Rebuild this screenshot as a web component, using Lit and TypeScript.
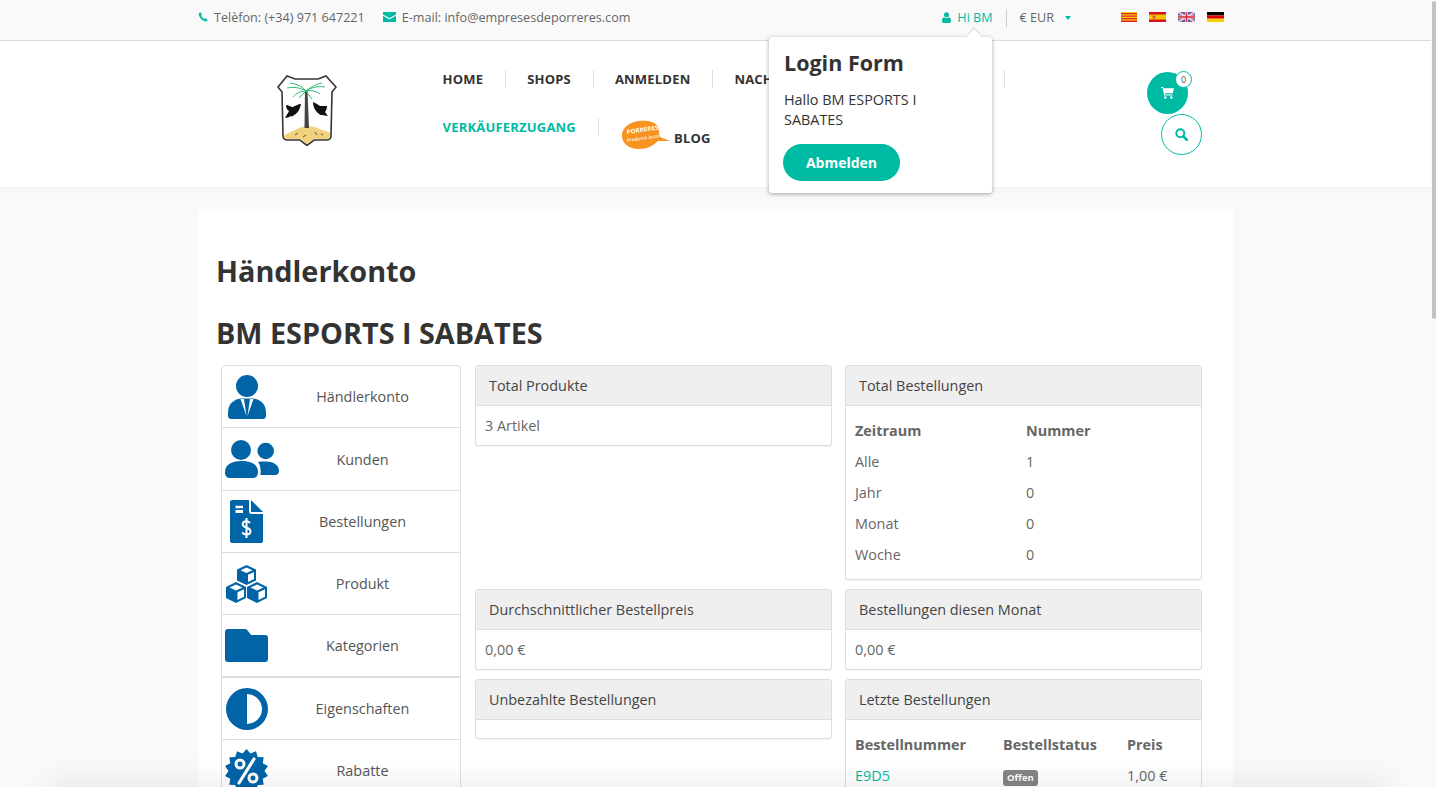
import { LitElement, html, css, svg } from 'lit';
import { customElement } from 'lit/decorators.js';

// spiky badge behind the percent sign
const starPoints = () => {
  const pts: string[] = [];
  for (let i = 0; i < 28; i++) {
    const r = i % 2 ? 18 : 22;
    const a = (i * Math.PI) / 14;
    pts.push(`${(21.5 + r * Math.sin(a)).toFixed(1)},${(22 - r * Math.cos(a)).toFixed(1)}`);
  }
  return pts.join(' ');
};

const icons: Record<string, unknown> = {
  merchant: svg`<circle cx="19" cy="11" r="11"/>
    <path d="M0 38c0-8 4-12 10-14l3-.5h12l3 .5c6 2 10 6 10 14v2c0 3-1 4-4 4H4c-3 0-4-1-4-4z"/>
    <path d="M12.500 24h3.500l2.500 17zM25.500 24h-3.500l-2.500 17z" fill="#fff"/>`,
  customers: svg`<circle cx="16" cy="10" r="10"/>
    <path d="M0 32c0-7 6-11 16.500-11S33 25 33 32c0 4-2 6-5 6H5c-3 0-5-2-5-6z"/>
    <circle cx="40.700" cy="11" r="8.300"/>
    <path d="M33 22c2-.500 5-.500 8-.500 8 0 13 4 13 9 0 3-1.500 4.500-4 4.500H35.500c.500-5 0-10-2.500-13z"/>`,
  orders: svg`<path fill-rule="evenodd" d="M2 0h17v11c0 2 1 3 3 3h11v27c0 1-1 2-2 2H2c-1 0-2-1-2-2V2C0 1 1 0 2 0zM5.500 5.700v2.600H13V5.700zM5.500 10v3H13v-3z"/>
    <path d="M21 0l12 12H21z"/>
    <path d="M20 23c-1-1.200-2.200-1.700-3.500-1.700-2.200 0-3.800 1-3.800 3 0 4.500 7.800 2.500 7.800 7 0 2.200-1.800 3.200-4 3.200-1.700 0-3.300-.800-4.300-2.200M16.500 18v20" fill="none" stroke="#fff" stroke-width="2"/>`,
  product: svg`<path d="M21.500 0l9.500 4.500v11l-9.500 4.500-9.500-4.500v-11z"/>
    <path d="M11 17l10 5v11l-10 5-10-5V22z"/>
    <path d="M32 17l10 5v11l-10 5-10-5V22z"/>
    <g fill="#fff">
      <path d="M21.500 2.500l6 2.800-6 2.800-6-2.800z"/><path d="M23 9.800l6-2.800v7l-6 2.900z"/>
      <path d="M11 19.500l6.500 3-6.500 3-6.500-3z"/><path d="M12.500 27.200l6.500-3v7.500l-6.500 3.200z"/>
      <path d="M32 19.500l6.500 3-6.500 3-6.500-3z"/><path d="M33.500 27.200l6.500-3v7.500l-6.500 3.200z"/>
    </g>`,
  folder: svg`<path d="M3 0h16c2 0 3 .500 4 2l3 4h14c2 0 3 1 3 3v21c0 2-1 3-3 3H3c-2 0-3-1-3-3V3c0-2 1-3 3-3z"/>`,
  contrast: svg`<path fill-rule="evenodd" d="M21 0a21 21 0 1 1 0 42a21 21 0 0 1 0-42zM21 6v30a15 15 0 0 0 0-30z"/>`,
  discount: svg`<polygon points=${starPoints()}/>
    <g fill="none" stroke="#fff"><circle cx="15" cy="15" r="4" stroke-width="3"/><circle cx="28" cy="29" r="4" stroke-width="3"/><path d="M29 10L14 34" stroke-width="3.200" stroke-linecap="round"/></g>`,
};

const menu = [
  { label: 'Händlerkonto', icon: 'merchant', x: 6, w: 38, h: 44, rowH: 62 },
  { label: 'Kunden', icon: 'customers', x: 3, w: 54, h: 38, rowH: 63 },
  { label: 'Bestellungen', icon: 'orders', x: 8, w: 33, h: 43, rowH: 62 },
  { label: 'Produkt', icon: 'product', x: 3, w: 43, h: 38, rowH: 62 },
  { label: 'Kategorien', icon: 'folder', x: 3, w: 43, h: 33, rowH: 63 },
  { label: 'Eigenschaften', icon: 'contrast', x: 4, w: 42, h: 42, rowH: 62 },
  { label: 'Rabatte', icon: 'discount', x: 3, w: 43, h: 44, rowH: 62 },
];

@customElement('app-root')
export class AppRoot extends LitElement {
  static styles = css`
    :host {
      display: block;
      height: 787px;
      overflow: hidden;
      position: relative;
      background: #f9f9f9;
      font-family: 'Open Sans', sans-serif;
      font-size: 14.400px;
      color: #666;
    }

    a { color: inherit; text-decoration: none; }

    .topbar {
      height: 34px;
      padding: 0 212px 6px 198px;
      background: #f9f9f9;
      border-bottom: 1px solid #ddd;
      display: flex;
      align-items: center;
      font-size: 12.600px;
      color: #666;
    }
    .top-left { display: flex; gap: 18px; }
    .top-item { display: flex; align-items: center; gap: 6px; }
    .top-item svg { fill: #00bba3; display: block; }
    .top-right { margin-left: auto; display: flex; align-items: center; }
    .hi { color: #00bba3; display: flex; align-items: center; gap: 6px; padding-right: 13px; }
    .hi svg { fill: #00bba3; display: block; }
    .currency { border-left: 1px solid #ccc; height: 18px; padding-left: 13px; display: flex; align-items: center; gap: 11px; margin-top: 2px; }
    .currency span { margin-top: -2px; }
    .caret { width: 0; height: 0; border: 3.500px solid transparent; border-top: 4px solid #00bba3; border-bottom: 0; }
    .flags { display: flex; gap: 12px; margin-left: 50px; }
    .flags svg { display: block; }

    .header {
      height: 146px;
      background: #fff;
      display: flex;
      box-shadow: 0 2px 8px rgba(0,0,0,.04);
      position: relative;
    }
    .logo { margin: 34px 0 0 277px; width: 60px; height: 71px; flex: none; }
    .nav { margin-left: 105.500px; width: 704.500px; flex: none; padding-top: 29px; }
    .nav-row { display: flex; align-items: center; height: 18px; font-weight: 700; font-size: 13px; color: #333; letter-spacing: .2px; }
    .nav-row + .nav-row { margin-top: 30px; align-items: flex-start; }
    .nav-row a { padding-right: 22px; margin-right: 21px; border-right: 1px solid #ddd; line-height: 18px; flex: none; }
    .nav-row a.wide { width: 270px; padding: 0; margin: 0; box-sizing: content-box; }
    .nav-row .seller { color: #00bba3; margin-right: 22px; }
    .blog { display: flex; align-items: center; gap: 4px; margin-top: 2px; }
    .blog-logo { display: block; flex: none; }
    .blog a { border: 0; padding: 0; margin: 6px 0 0; }
    .actions { margin-top: 31px; width: 56px; display: flex; flex-direction: column; align-items: flex-start; }
    .cart {
      width: 41px; height: 42px; border-radius: 50%; background: #00bba3;
      display: flex; align-items: center; justify-content: center; position: relative;
    }
    .cart svg { fill: #fff; display: block; }
    .badge {
      position: absolute; right: -4px; top: -1px; width: 17px; height: 17px;
      border-radius: 50%; background: #fff; border: 1px solid #00bba3; box-sizing: border-box;
      font-size: 9px; line-height: 15px; text-align: center; color: #555;
    }
    .search {
      margin-left: 14px; width: 41px; height: 41px; box-sizing: border-box;
      border: 1px solid #00bba3; border-radius: 50%; display: flex; align-items: center; justify-content: center;
      background: #fff;
    }
    .search svg { display: block; }

    .popover {
      position: absolute; left: 769px; top: 37px; width: 223px; height: 156px; box-sizing: border-box;
      background: #fff; border-radius: 3px; box-shadow: 0 1px 4px rgba(0,0,0,.35);
      padding: 13px 15px; z-index: 5; color: #333;
    }
    .popover::before {
      content: ''; position: absolute; right: 13px; top: -6px; width: 10px; height: 10px;
      background: #fff; transform: rotate(45deg); box-shadow: -1px -1px 1px rgba(0,0,0,.12);
    }
    .popover h3 { margin: 0 0 14px; font-size: 21.500px; font-weight: 700; line-height: 26px; color: #333; }
    .popover p { margin: 0 0 14px; line-height: 20px; width: 170px; }
    .btn {
      display: block; background: #00bba3; color: #fff; font-weight: 700; font-size: 14px;
      height: 37px; line-height: 37px; width: 117px; text-align: center; border-radius: 19px; margin-left: -1px;
    }

    .main { margin: 22px 203px 0 198px; background: #fff; padding: 42px 31px 0 18px; }
    h1 { margin: 0; color: #333; font-size: 28.800px; font-weight: 700; line-height: 40px; }
    h1.shop { margin-top: 22px; }
    .columns { display: flex; margin-top: 12px; margin-left: 5px; gap: 14px; }
    .side { width: 240px; flex: none; border: 1px solid #ddd; border-radius: 4px 4px 0 0; box-sizing: border-box; height: 500px; }
    .side-item { display: flex; align-items: center; border-bottom: 1px solid #ddd; box-sizing: border-box; color: #555; }
    .side-item:nth-child(5) { border-bottom-width: 2px; }
    .side-item span { flex: 1; text-align: center; }
    .side-ico { flex: none; }
    .side-ico svg { fill: #0064a7; display: block; overflow: visible; }

    .grid { display: grid; grid-template-columns: 357px 357px; column-gap: 13px; align-items: start; align-content: start; }
    .panel { border: 1px solid #ddd; border-radius: 3px; background: #fff; box-sizing: border-box; box-shadow: 0 1px 1px rgba(0,0,0,.05); }
    .panel-head { height: 39px; line-height: 39px; background: #efefef; border-bottom: 1px solid #ddd; padding: 0 13px; color: #444; }
    .panel-body { padding: 10px 9px; color: #666; line-height: 20px; }
    .stat { height: 81px; margin-bottom: 9px; }
    .empty { height: 60px; }
    .empty .panel-body { padding: 0; height: 18px; }
    .a { grid-column: 1; grid-row: 1; height: 81px; }
    .b { grid-column: 2; grid-row: 1; height: 215px; margin-bottom: 9px; }
    .c { grid-column: 1; grid-row: 2; }
    .d { grid-column: 2; grid-row: 2; }
    .e { grid-column: 1; grid-row: 3; }
    .f { grid-column: 2; grid-row: 3; }
    table { border-collapse: collapse; width: 100%; table-layout: fixed; }
    th { text-align: left; font-weight: 700; color: #666; height: 31px; padding: 0; }
    td { height: 31px; padding: 0; color: #666; }
    .col-total { width: 171px; }
    .col-order { width: 148px; }
    .col-status { width: 124px; }
    .tbl { padding: 9px 9px 0; }
    .tbl a { color: #00bba3; }
    .label { display: inline-block; background: #858585; color: #fff; font-size: 9.500px; font-weight: 700; border-radius: 3px; padding: 0 4px; line-height: 16px; }

    .shade {
      position: absolute; left: 50px; right: 50px; bottom: -12px; height: 12px;
      box-shadow: 0 0 30px rgba(0,0,0,.16);
      pointer-events: none;
    }
    .scrollbar { position: absolute; right: 0; top: 0; width: 5px; height: 787px; background: #f9f9f9; z-index: 9; }
    .thumb { position: absolute; left: 1px; top: 1px; right: 0; height: 318px; background: #c2c2c2; border-radius: 2px; }
  `;

  render() {
    return html`
      <div class="topbar">
        <div class="top-left">
          <div class="top-item">
            <svg width="10" height="10" viewBox="0 0 10 10"><path d="M2.500.300L.800 1.200C.300 4.800 4.400 9.400 8.700 9.500l1-1.600-2.300-1.800-1.100.900C5 6.500 3.600 5 3 3.600l1-1z"/></svg>
            <span>Telèfon: (+34) 971 647221</span>
          </div>
          <div class="top-item">
            <svg width="13" height="10" viewBox="0 0 13 10"><path d="M0 0h13v2.500L6.500 6 0 2.500zM0 3.800L6.500 7.500 13 3.800V10H0z"/></svg>
            <span>E-mail: info@empresesdeporreres.com</span>
          </div>
        </div>
        <div class="top-right">
          <a class="hi">
            <svg width="9" height="11" viewBox="0 0 9 11"><circle cx="4.500" cy="2.700" r="2.500"/><path d="M0 9c0-2.500 1-3.500 2.500-3.800a3 3 0 0 0 4 0C8 5.500 9 6.500 9 9c0 1-.6 2-1.500 2h-6C.6 11 0 10 0 9z"/></svg>
            Hi BM
          </a>
          <div class="currency"><span>€ EUR</span><i class="caret"></i></div>
          <div class="flags">
            <svg width="16" height="10" viewBox="0 0 16 10"><rect width="16" height="10" fill="#f7d116"/><path d="M0 1h16v1.300H0zM0 3.500h16v1.300H0zM0 6h16v1.300H0zM0 8.500h16V10H0z" fill="#e2231a"/></svg>
            <svg width="17" height="10" viewBox="0 0 17 10"><rect width="17" height="10" fill="#d5101e"/><rect y="2.500" width="17" height="5" fill="#fbc400"/><rect x="3.500" y="3.500" width="3" height="3" fill="#c0692a"/></svg>
            <svg width="17" height="10" viewBox="0 0 17 10"><rect width="17" height="10" fill="#5a5a9e"/><path d="M0 0l17 10M17 0L0 10" stroke="#e8c9d2" stroke-width="2"/><path d="M7 0h3v10H7zM0 3.500h17v3H0z" fill="#f3d6db"/><path d="M7.800 0h1.400v10H7.800zM0 4.300h17v1.400H0z" fill="#d8283a"/></svg>
            <svg width="17" height="10" viewBox="0 0 17 10"><rect width="17" height="3.400" fill="#000"/><rect y="3.400" width="17" height="3.300" fill="#d00"/><rect y="6.700" width="17" height="3.300" fill="#ffce00"/></svg>
          </div>
        </div>
      </div>

      <div class="header">
        <svg class="logo" viewBox="0 0 60 71">
          <path d="M10 1l8 3h23l8-3 10 11-4 5-1 44c0 3-2 4-5 4H37l-7 5.500-7-5.500H11c-3 0-5-1-5-4L5 17l-4-5z" fill="#fff" stroke="#3a3333" stroke-width="1.600"/>
          <path d="M7 62c0-3 5-4 11-7 6-4 16-5 22-2 4 2 10 3 13 5l0 3c0 2-2 3-4 3H37l-7 5-7-5H11c-2 0-4-1-4-2z" fill="#f2d27e"/>
          <path d="M28 16h2.500l1.500 37h-4.500z" fill="#444"/>
          <path d="M29 16C24 10 18 9 13 8M29 16C22 12 16 12 10 13M29 16C24 16 19 18 16 22M29 16C35 11 40 9 45 8M29 16C35 12 42 11 48 12M29 16C34 15 39 16 43 19M29 16l-7 7M29 16l6 8" stroke="#2eb872" stroke-width="1" fill="none"/>
          <path d="M24 29c-3 0-6 2-8 3-2 0-5-2-7-2 0 2 1 5 3 6-1 2-3 5-4 7 2 0 4-1 6-2 1 1 2 0 3-1 4-2 6-6 7-11z" fill="#111"/>
          <path d="M36 27c3 1 5 3 7 4 2 0 5 0 7 0 0 2-1 5-2 6 1 1 2 3 3 4-2 0-4-1-6-1-1 0-2 0-3-1-4-3-6-7-6-12z" fill="#111"/>
          <path d="M18 60l3-2M26 62l3-2M38 57l2 3M44 59l2 1" stroke="#554" stroke-width="1"/>
        </svg>
        <nav class="nav">
          <div class="nav-row">
            <a>HOME</a><a>SHOPS</a><a>ANMELDEN</a><a class="wide">NACHRICHTEN</a>
          </div>
          <div class="nav-row">
            <a class="seller">VERKÄUFERZUGANG</a>
            <div class="blog">
              <svg class="blog-logo" width="49" height="30" viewBox="0 0 49 30">
                <path d="M1 14C2 7 9 2 18 1c7-1 14 0 18 4 2 3 2 9 3 12l10 4-12 0c-5 5-11 8-19 8C8 29 0 23 1 14z" fill="#f7931e"/>
                <text x="6" y="14" font-family="Open Sans" font-size="6" font-weight="700" fill="#fff" transform="rotate(-8 6 14)">PORRERES</text>
                <text x="6" y="22" font-family="Open Sans" font-size="4.600" font-style="italic" font-weight="600" fill="#fff" transform="rotate(-8 6 22)">Producte local</text>
              </svg>
              <a>BLOG</a>
            </div>
          </div>
        </nav>
        <div class="actions">
          <div class="cart">
            <svg width="13" height="12" viewBox="0 0 13 12"><path d="M0 0h2.300l.4 1.300H13l-1.300 5H4l.3 1.200h7.200v1.100H3.300L1.500 1.100H0z"/><circle cx="4.300" cy="10.500" r="1.200"/><circle cx="10.300" cy="10.500" r="1.200"/></svg>
            <div class="badge">0</div>
          </div>
          <div class="search">
            <svg width="13" height="13" viewBox="0 0 13 13" fill="none" stroke="#00bba3"><circle cx="5.300" cy="5.300" r="4" stroke-width="2"/><path d="M8.300 8.300L12 12" stroke-width="2.600" stroke-linecap="round"/></svg>
          </div>
        </div>
      </div>

      <div class="popover">
        <h3>Login Form</h3>
        <p>Hallo BM ESPORTS I SABATES</p>
        <a class="btn">Abmelden</a>
      </div>

      <div class="main">
        <h1>Händlerkonto</h1>
        <h1 class="shop">BM ESPORTS I SABATES</h1>
        <div class="columns">
          <div class="side">
            ${menu.map(
              (m) => html`
                <div class="side-item" style="height:${m.rowH}px">
                  <div class="side-ico" style="padding-left:${m.x}px;width:${43 - m.x}px">
                    <svg width=${m.w} height=${m.h} viewBox="0 0 ${m.w} ${m.h}">${icons[m.icon]}</svg>
                  </div>
                  <span>${m.label}</span>
                </div>
              `,
            )}
          </div>
          <div class="grid">
            <div class="panel a">
              <div class="panel-head">Total Produkte</div>
              <div class="panel-body">3 Artikel</div>
            </div>
            <div class="panel b">
              <div class="panel-head">Total Bestellungen</div>
              <div class="tbl">
                <table>
                  <colgroup><col class="col-total" /><col /></colgroup>
                  <tr><th>Zeitraum</th><th>Nummer</th></tr>
                  <tr><td>Alle</td><td>1</td></tr>
                  <tr><td>Jahr</td><td>0</td></tr>
                  <tr><td>Monat</td><td>0</td></tr>
                  <tr><td>Woche</td><td>0</td></tr>
                </table>
              </div>
            </div>
            <div class="panel stat c">
              <div class="panel-head">Durchschnittlicher Bestellpreis</div>
              <div class="panel-body">0,00 €</div>
            </div>
            <div class="panel stat d">
              <div class="panel-head">Bestellungen diesen Monat</div>
              <div class="panel-body">0,00 €</div>
            </div>
            <div class="panel empty e">
              <div class="panel-head">Unbezahlte Bestellungen</div>
              <div class="panel-body"></div>
            </div>
            <div class="panel f">
              <div class="panel-head">Letzte Bestellungen</div>
              <div class="tbl">
                <table>
                  <colgroup><col class="col-order" /><col class="col-status" /><col /></colgroup>
                  <tr><th>Bestellnummer</th><th>Bestellstatus</th><th>Preis</th></tr>
                  <tr><td><a>E9D5</a></td><td><span class="label">Offen</span></td><td>1,00 €</td></tr>
                </table>
              </div>
            </div>
          </div>
        </div>
      </div>

      <div class="shade"></div>
      <div class="scrollbar"><div class="thumb"></div></div>
    `;
  }
}
